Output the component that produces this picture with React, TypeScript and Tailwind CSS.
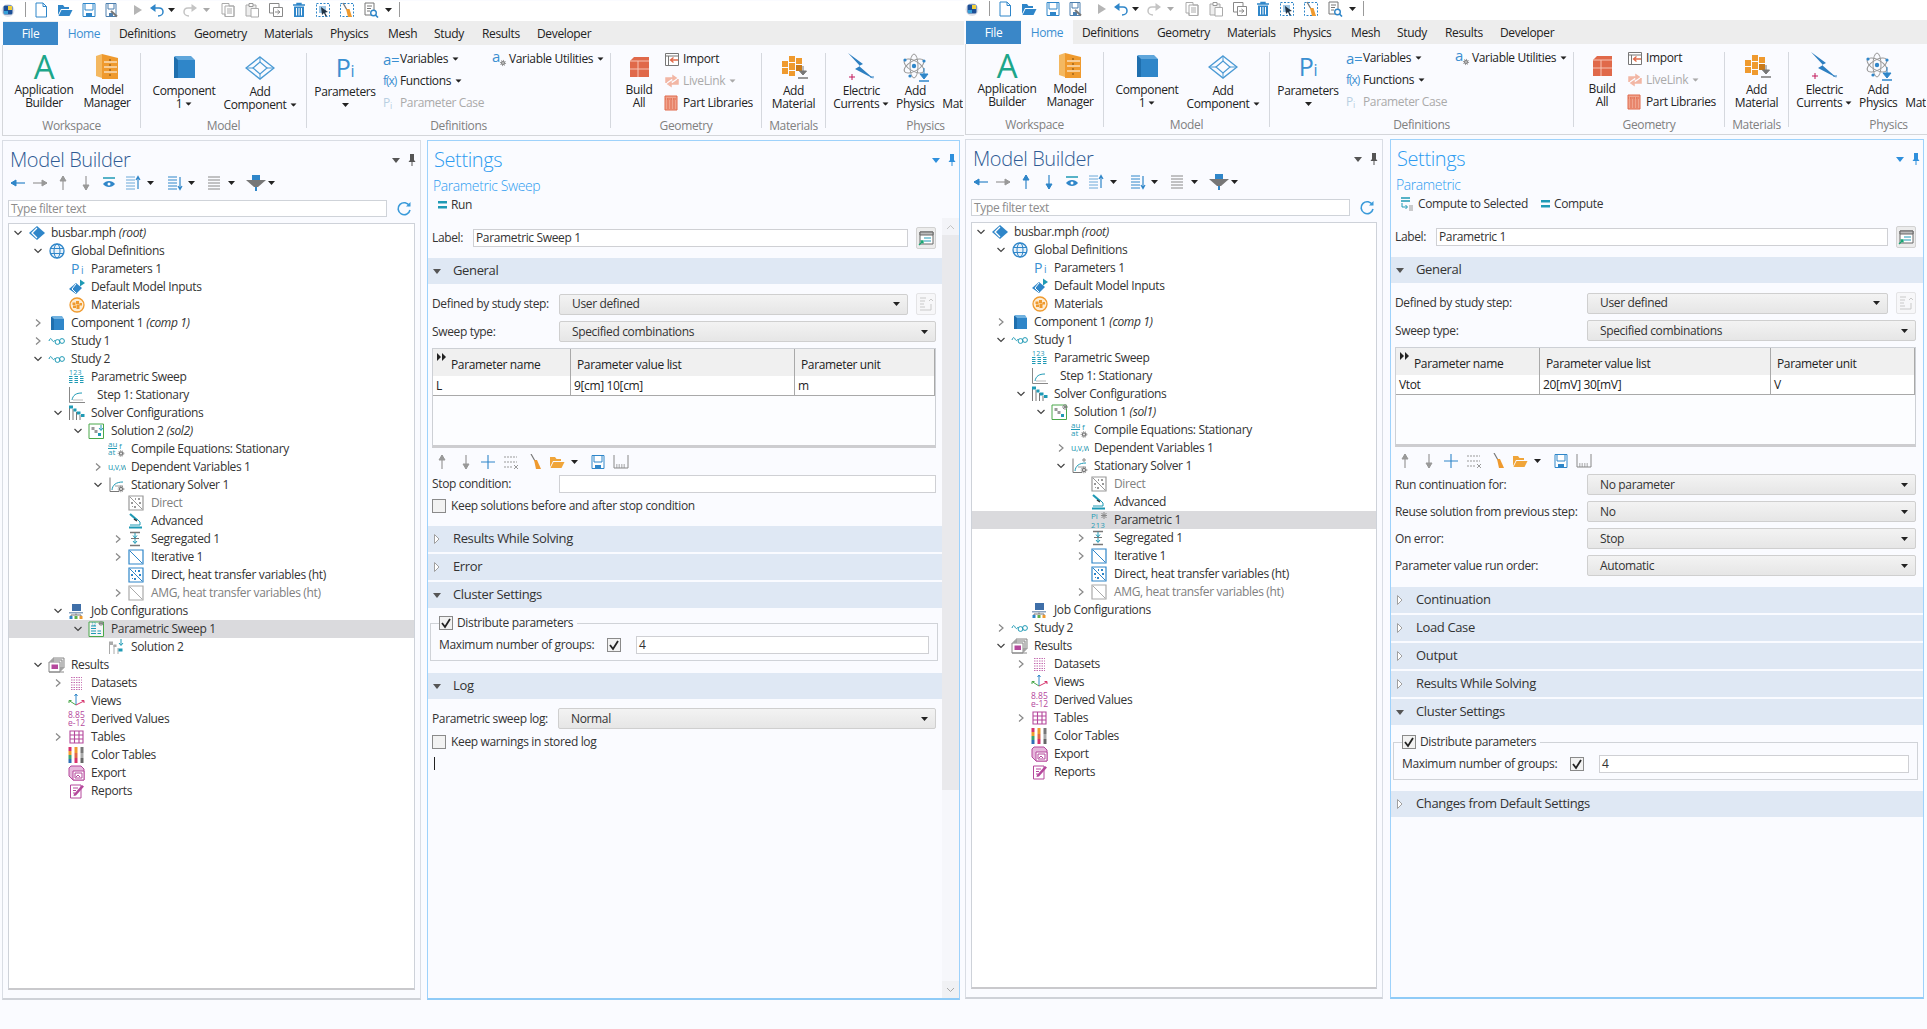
import type { ReactNode } from "react";

const B = "#2f86c9";
const T = "#1f9ab5";
const O = "#ef9a2e";
const M = "#b5489c";
const R = "#e0694a";

function S({ w = 16, h = 16, children, className = "" }: { w?: number; h?: number; children: ReactNode; className?: string }) {
	return (
		<svg width={w} height={h} viewBox={`0 0 ${w} ${h}`} fill="none" className={`shrink-0 ${className}`}>
			{children}
		</svg>
	);
}

function Tri({ className = "", color = "#222" }: { className?: string; color?: string }) {
	return (
		<S w={7} h={4} className={className}>
			<path d="M0 0H7L3.5 4Z" fill={color} />
		</S>
	);
}

function Gear({ x, y, r = 2.5 }: { x: number; y: number; r?: number }) {
	return (
		<g>
			<circle cx={x} cy={y} r={r + 0.6} fill="none" stroke="#777" strokeWidth="1" strokeDasharray="1 1" />
			<circle cx={x} cy={y} r={r} fill="#777" />
			<circle cx={x} cy={y} r={r / 2.5} fill="#fff" />
		</g>
	);
}

/* quick access icons */
const AppIcon = () => (
	<S>
		<circle cx="8" cy="8.5" r="6.5" fill="#dfe3ea" />
		<rect x="3.5" y="3.5" width="9" height="9" rx="1.5" fill="#1c4f96" />
		<path d="M8 4h4v4H8z" fill="#f1cf3b" />
		<path d="M4 9h4v3H4z" fill="#35a0d9" />
	</S>
);
const NewFile = () => (
	<S>
		<path d="M3 1H10L13.5 4.5V15H3Z" stroke={B} fill="#fff" />
		<path d="M10 1V4.5H13.5" stroke={B} />
	</S>
);
const OpenFolder = ({ c = B }: { c?: string }) => (
	<S>
		<path d="M1 3H6L7.5 5H12V7H4L1 13Z" fill={c} />
		<path d="M4.5 8H15.5L12.5 14H1.5Z" fill={c} />
	</S>
);
const Save = ({ c = B }: { c?: string }) => (
	<S>
		<path d="M2 1.5H14V14.5H2Z" stroke={c} fill="#fff" />
		<path d="M4 1.5H12V8H4Z" stroke={c} />
		<path d="M5 11H11V14.5H5Z" fill={c} />
	</S>
);
const SaveAs = () => (
	<S>
		<path d="M2 1.5H12V14.5H2Z" stroke="#4d7fae" fill="#fff" />
		<path d="M4 1.5H10V7H4Z" stroke="#4d7fae" />
		<path d="M5 11H9V14.5H5Z" fill="#4d7fae" />
		<path d="M7 9L13 14.5" stroke="#777" strokeWidth="2" />
	</S>
);
const Run = () => (
	<S>
		<path d="M4 3L12 8L4 13Z" fill="#b5b5b5" />
	</S>
);
const Undo = ({ c = B, flip = false }: { c?: string; flip?: boolean }) => (
	<S className={flip ? "-scale-x-100" : ""}>
		<path d="M3 6H10C13 6 14 8 14 10C14 12 12 14 9 14" stroke={c} strokeWidth="1.5" />
		<path d="M6.5 2V10L1 6Z" fill={c} />
	</S>
);
const CopyDoc = () => (
	<S>
		<path d="M2 1.5H9V4H14V14.5H5V12H2Z" stroke="#aaa" fill="#fff" />
		<path d="M5 4H14V14.5H5Z" stroke="#aaa" />
		<path d="M7 7H12M7 9H12M7 11H12" stroke="#aaa" />
	</S>
);
const Paste = () => (
	<S>
		<path d="M2 3H12V14H2Z" stroke="#aaa" fill="#eee" />
		<path d="M5 1.5H9V4.5H5Z" stroke="#999" fill="#fff" />
		<path d="M7 6.5H14.5V15H7Z" stroke="#aaa" fill="#fff" />
	</S>
);
const Duplicate = () => (
	<S>
		<path d="M1.5 1.5H11V11H1.5Z" stroke="#888" />
		<path d="M5.5 5.5H14.5V14.5H5.5Z" stroke="#888" fill="#fff" />
		<path d="M7 10H11M9.5 8L12 10L9.5 12" stroke="#888" />
	</S>
);
const Trash = () => (
	<S>
		<path d="M2 3H14M6 3V1.5H10V3" stroke={B} strokeWidth="1.4" />
		<path d="M3 4.5H13V15H3Z" fill={B} />
		<path d="M5.5 6V13.5M8 6V13.5M10.5 6V13.5" stroke="#fff" />
	</S>
);
const SelectBox = () => (
	<S>
		<path d="M1.5 1.5H14.5V14.5H1.5Z" stroke={B} strokeDasharray="2 1.5" />
		<path d="M4 4H11V11H4Z" fill="#9ec7e6" />
		<path d="M6 5L13 10L10 10.5L12 14L10.5 14.5L9 11L7 13Z" fill="#234" />
	</S>
);
const ClearBox = () => (
	<S>
		<path d="M1.5 1.5H14.5V14.5H1.5Z" stroke={B} strokeDasharray="2 1.5" />
		<path d="M4 1L8 8" stroke="#777" strokeWidth="1.3" />
		<path d="M7 7L10.5 7L13 15H9Z" fill={O} />
	</S>
);
const FindDoc = () => (
	<S>
		<path d="M2 1H11V13H2Z" stroke="#777" fill="#fff" />
		<path d="M4 4H9M4 6.5H8M4 9H7" stroke="#777" />
		<circle cx="10.5" cy="11" r="2.8" stroke={B} strokeWidth="1.4" fill="#fff" />
		<path d="M12.5 13L15 15.5" stroke={B} strokeWidth="1.6" />
	</S>
);
const VSep = () => <div className="w-px h-[15px] bg-[#9a9a9a]" />;

function QuickBar() {
	return (
		<div className="h-[20px] pb-[3px] bg-white flex items-center">
			<AppIcon />
			<div className="ml-[9px]"><VSep /></div>
			<div className="ml-[7px]"><NewFile /></div>
			<div className="ml-[8px]"><OpenFolder /></div>
			<div className="ml-[8px]"><Save /></div>
			<div className="ml-[7px]"><SaveAs /></div>
			<div className="ml-[10px]"><Run /></div>
			<div className="ml-[3px]"><Undo /></div>
			<Tri className="ml-[3px]" />
			<div className="ml-[7px]"><Undo c="#c4c4c4" flip /></div>
			<Tri className="ml-[5px]" color="#aaa" />
			<div className="ml-[10px]"><CopyDoc /></div>
			<div className="ml-[8px]"><Paste /></div>
			<div className="ml-[8px]"><Duplicate /></div>
			<div className="ml-[7px]"><Trash /></div>
			<div className="ml-[8px]"><SelectBox /></div>
			<div className="ml-[8px]"><ClearBox /></div>
			<div className="ml-[8px]"><FindDoc /></div>
			<Tri className="ml-[6px]" />
			<div className="ml-[7px]"><VSep /></div>
		</div>
	);
}

const tabs = [
	{ label: "Definitions", w: "w-[75px]" },
	{ label: "Geometry", w: "w-[70px]" },
	{ label: "Materials", w: "w-[66px]" },
	{ label: "Physics", w: "w-[58px]" },
	{ label: "Mesh", w: "w-[46px]" },
	{ label: "Study", w: "w-[48px]" },
	{ label: "Results", w: "w-[55px]" },
	{ label: "Developer", w: "w-[70px]" },
];

function TabStrip() {
	return (
		<div className="h-[24px] bg-[#ededed] flex items-end ml-px">
			<div className="w-[55px] h-[23px] bg-[#3a87c8] text-white flex items-center justify-center">File</div>
			<div className="w-[52px] h-[24px] pt-px bg-[#fafbff] text-[#3a8fd1] flex items-center justify-center">Home</div>
			<div className="w-[9px]" />
			{tabs.map((t) => (
				<div key={t.label} className={`${t.w} h-[24px] pt-px flex items-center`}>
					{t.label}
				</div>
			))}
		</div>
	);
}

/* ribbon icons */
const BigA = () => <span className="text-[33px] leading-[30px] text-[#1da68a]">A</span>;
const PiBig = () => (
	<span className="text-[#3a8fd1] leading-[30px] pt-[4px]">
		<span className="text-[25px]">P</span>
		<span className="text-[16px]">i</span>
	</span>
);
const Manager = () => (
	<S w={24} h={27}>
		<path d="M1 3L7 1V25L1 23Z" fill="#f4b860" />
		<path d="M7 1L23 5V26H7Z" fill={O} />
		<path d="M9 9H22M9 14H22M9 19H22" stroke="#fff" />
		<path d="M14 6.5h2v1h-2zM14 11.5h2v1h-2zM14 16.5h2v1h-2zM14 21.5h2v1h-2z" fill="#7a4a10" />
	</S>
);
const CubeBig = () => (
	<S w={24} h={24}>
		<path d="M2 2H6L9 6V23H2Z" fill="#1f6fae" />
		<path d="M2 1H19L23 5H6Z" fill="#5fa6db" />
		<path d="M6 5H23V23H6Z" fill={B} />
	</S>
);
const WireBig = () => (
	<S w={30} h={24}>
		<path d="M15 1L29 12L15 23L1 12Z" stroke="#4b9ad4" strokeWidth="1.4" />
		<path d="M8 12L15 6L22 12L15 18Z" stroke="#4b9ad4" strokeWidth="1.2" />
		<path d="M15 1V6M1 12H8M22 12H29M15 18V23" stroke="#4b9ad4" />
	</S>
);
const BuildIcon = () => (
	<S w={22} h={22}>
		<path d="M2 5L6 1H21V21H2Z" fill={R} />
		<path d="M2 5H21M10 5V21M2 13H21" stroke="#f7c4b4" />
	</S>
);
const MaterialIcon = () => (
	<S w={30} h={28}>
		<path d="M3 8h6v6H3zM10 3h6v6h-6zM17 5h6v6h-6zM3 15h6v6H3zM10 10h6v7h-6zM10 18h6v5h-6z" fill={O} />
		<path d="M17 12h6v6h-6z" fill="#c97a1a" />
		<path d="M24 13V21M20.5 18L24 22L27.5 18Z" stroke="#777" fill="#777" />
		<path d="M19 25H29" stroke="#777" strokeWidth="1.5" />
	</S>
);
const ElectricIcon = () => (
	<S w={30} h={30}>
		<path d="M2 1L17 12L13 14L28 27L9 17L14 14Z" fill="#2d7fc1" />
		<path d="M3 25H9M6 22V28" stroke="#c2185b" />
		<path d="M24 25H28" stroke="#2d7fc1" />
	</S>
);
const AtomIcon = () => (
	<S w={28} h={30}>
		<ellipse cx="13" cy="14" rx="11" ry="5" stroke="#999" transform="rotate(30 13 14)" />
		<ellipse cx="13" cy="14" rx="11" ry="5" stroke="#999" transform="rotate(-30 13 14)" />
		<ellipse cx="13" cy="14" rx="4" ry="12" stroke="#999" />
		<circle cx="13" cy="14" r="2.2" fill={B} />
		<circle cx="4" cy="8" r="1.6" fill={B} />
		<circle cx="23" cy="9" r="1.6" fill={B} />
		<circle cx="9" cy="24" r="1.6" fill={B} />
		<path d="M23 16V26M19 22L23 27L27 22Z" stroke={B} fill={B} />
		<path d="M18 29H28" stroke={B} strokeWidth="1.5" />
	</S>
);
const ImportIcon = () => (
	<S w={16} h={14}>
		<path d="M1.5 1.5H14.5V13.5H1.5Z" stroke="#777" fill="#fff" />
		<path d="M1.5 4H14.5M4.5 4V13.5" stroke="#777" />
		<path d="M14 8H7M9.5 5.5L6.5 8L9.5 10.5" stroke={R} strokeWidth="1.3" />
	</S>
);
const LiveLinkIcon = () => (
	<S w={16} h={14}>
		<path d="M2 9V4H9M9 2V6L12 4ZM14 5V10H7M7 8V12L4 10Z" stroke="#f2b6a4" strokeWidth="1.5" fill="#f2b6a4" />
	</S>
);
const PartLib = () => (
	<S w={14} h={16}>
		<path d="M1 1H13V15H1Z" fill="#f0a48e" stroke={R} />
		<path d="M4 3V14M7 3V14M10 3V14" stroke={R} />
		<path d="M1 4H13" stroke={R} strokeDasharray="1 1" />
	</S>
);

function Big({ w, top, icon, lines, drop }: { w: string; top: string; icon: ReactNode; lines: string[]; drop?: boolean }) {
	return (
		<div className={`${w} shrink-0 flex flex-col items-center leading-[13px]`}>
			<div className={`${top} flex items-center justify-center`}>{icon}</div>
			{lines.map((l, i) => (
				<div key={l} className="whitespace-nowrap flex items-center h-[13px]">
					{l}
					{drop && lines.length > 1 && i === lines.length - 1 && <Tri className="ml-[3px] scale-90" />}
				</div>
			))}
			{drop && lines.length === 1 && (
				<div className="h-[13px] flex items-center">
					<Tri />
				</div>
			)}
		</div>
	);
}

function Small({ icon, text, drop, off, w = "w-[17px]" }: { icon: ReactNode; text: string; drop?: boolean; off?: boolean; w?: string }) {
	return (
		<div className={`h-[22px] flex items-center whitespace-nowrap ${off ? "text-[#aaa]" : ""}`}>
			<div className={`${w} shrink-0 flex items-center`}>{icon}</div>
			{text}
			{drop && <Tri className="ml-[4px] scale-90" color={off ? "#aaa" : "#222"} />}
		</div>
	);
}

const Group = ({ w, label, labelClass = "", children }: { w: string; label: string; labelClass?: string; children: ReactNode }) => (
	<div className={`${w} shrink-0 flex flex-col overflow-hidden`}>
		<div className="h-[73px] pt-[5px] flex">{children}</div>
		<div className={`h-[16px] flex items-center justify-center text-[#808080] ${labelClass}`}>{label}</div>
	</div>
);
const Sep = () => <div className="w-px h-[75px] mt-[8px] bg-[#d5d8de] shrink-0" />;

function Ribbon() {
	return (
		<div className="h-[91px] bg-[#fafbff] border-b border-l border-[#d4d6da] flex">
			<Group w="w-[137px]" label="Workspace">
				<div className="w-[7px]" />
				<Big w="w-[68px]" top="h-[33px]" icon={<BigA />} lines={["Application", "Builder"]} />
				<Big w="w-[58px]" top="h-[33px]" icon={<Manager />} lines={["Model", "Manager"]} />
			</Group>
			<Sep />
			<Group w="w-[165px]" label="Model">
				<div className="w-px" />
				<Big w="w-[84px]" top="h-[34px]" icon={<CubeBig />} lines={["Component", "1"]} drop />
				<Big w="w-[68px]" top="h-[35px]" icon={<WireBig />} lines={["Add", "Component"]} drop />
			</Group>
			<Sep />
			<Group w="w-[303px]" label="Definitions">
				<div className="w-[6px]" />
				<Big w="w-[64px]" top="h-[35px]" icon={<PiBig />} lines={["Parameters"]} drop />
				<div className="w-[6px]" />
				<div className="w-[109px] -mt-[2px]">
					<Small icon={<span className="text-[#3a8fd1] text-[15px]">a=</span>} text="Variables" drop />
					<Small icon={<span className="text-[#3a8fd1] tracking-[-1px]">f(x)</span>} text="Functions" drop />
					<Small icon={<span className="text-[#b8cfe2]">P<sub className="text-[9px]">i</sub></span>} text="Parameter Case" off />
				</div>
				<div className="-mt-[2px]">
					<Small
						icon={
							<S w={16} h={16}>
								<text x="0" y="11" fontSize="15" fill="#3a8fd1">a</text>
								<Gear x={11} y={12} r={2} />
							</S>
						}
						text="Variable Utilities"
						drop
					/>
				</div>
			</Group>
			<Sep />
			<Group w="w-[150px]" label="Geometry">
				<div className="w-[4px]" />
				<Big w="w-[48px]" top="h-[33px]" icon={<BuildIcon />} lines={["Build", "All"]} />
				<div className="w-px" />
				<div className="-mt-[2px]">
					<Small w="w-[19px]" icon={<ImportIcon />} text="Import" />
					<Small w="w-[19px]" icon={<LiveLinkIcon />} text="LiveLink" drop off />
					<Small w="w-[19px]" icon={<PartLib />} text="Part Libraries" />
				</div>
			</Group>
			<Sep />
			<Group w="w-[63px]" label="Materials">
				<Big w="w-[63px]" top="h-[34px]" icon={<MaterialIcon />} lines={["Add", "Material"]} />
			</Group>
			<Sep />
			<Group w="w-[137px]" label="Physics" labelClass="pl-[62px]">
				<div className="w-[5px]" />
				<Big w="w-[62px]" top="h-[34px]" icon={<ElectricIcon />} lines={["Electric", "Currents"]} drop />
				<Big w="w-[46px]" top="h-[34px]" icon={<AtomIcon />} lines={["Add", "Physics"]} />
				<div className="pt-[47px] pl-[4px] leading-[13px]">Mat</div>
			</Group>
		</div>
	);
}

/* tree icons */
const RootIcon = () => (
	<S w={18}>
		<path d="M1 8L9 1L17 8L9 15Z" fill={B} />
		<path d="M9 3L4 8L9 13" stroke="#fff" strokeWidth="1.3" />
	</S>
);
const Globe = () => (
	<S w={18}>
		<circle cx="9" cy="8" r="7" stroke={B} strokeWidth="1.3" fill="#e6f1fa" />
		<ellipse cx="9" cy="8" rx="3" ry="7" stroke={B} />
		<path d="M2 5.5H16M2 10.5H16" stroke={B} />
	</S>
);
const PiSmall = () => (
	<span className="text-[#3a8fd1] text-[14px] leading-none ml-[3px]">
		P<span className="text-[10px] ml-[2px]">i</span>
	</span>
);
const InputsIcon = () => (
	<S w={18}>
		<path d="M1 10L8 4L14 9L8 15Z" fill={B} />
		<path d="M8 5L4 10L8 14" stroke="#fff" />
		<path d="M12 0.5L17 4L12 7.5Z" fill={T} />
	</S>
);
const MatIcon = () => (
	<S w={18}>
		<circle cx="9" cy="8" r="7" fill="#fdecd3" stroke={O} strokeWidth="1.3" />
		<path d="M4.5 5.5h3v2.5h-3zM8 4h3v3H8zM11.5 6h2.5v2.5h-2.5zM5 8.5h3V11H5zM8.5 7.5h3V12h-3z" fill={O} />
	</S>
);
const CubeSmall = () => (
	<S w={18}>
		<path d="M3 2H6L7 4V15H3Z" fill="#1f6fae" />
		<path d="M3 1H14L16 4H6Z" fill="#71b2e0" />
		<path d="M6 4H16V15H6Z" fill={B} />
	</S>
);
const StudyIcon = () => (
	<S w={18}>
		<path d="M1 8C2 5 3 5 4 7C5 9 6 9 7 7" stroke={T} />
		<circle cx="9.5" cy="9" r="2.4" stroke={T} />
		<circle cx="14" cy="8" r="2.4" stroke={T} />
	</S>
);
const SweepIcon = () => (
	<S w={18}>
		<text x="1" y="5.5" fontSize="7" fill={T} letterSpacing="0.3">123</text>
		<path d="M1 7.5H4.5M6.5 7.5H10M12 7.5H15.5M1 9.5H4.5M6.5 9.5H10M12 9.5H15.5M1 11.5H4.5M6.5 11.5H10M12 11.5H15.5M1 13.5H4.5M6.5 13.5H10M12 13.5H15.5" stroke={T} />
	</S>
);
const StepIcon = () => (
	<S w={18}>
		<path d="M1.5 0V15.5H17" stroke="#888" />
		<path d="M4 13C5 8 8 6 14 6" stroke={T} />
		<path d="M5 13H15" stroke="#bbb" />
	</S>
);
const SolverCfg = () => (
	<S w={18}>
		<path d="M1.5 1V15M5 4V15M8.5 7V15M12 10V15" stroke="#777" />
		<path d="M1 0.5h4v3H1zM5.5 3.5h3v3h-3zM9 6.5h3.5v3H9zM13 9h3.5v3H13z" fill={T} />
	</S>
);
const SolutionIcon = ({ spark = false }: { spark?: boolean }) => (
	<S w={18}>
		<path d="M1 1H15.5V15.5H1Z" stroke="#4aa84a" fill="#fff" />
		<path d="M3.5 4h3v3h-3zM6.5 7h3v3h-3z" fill="#999" />
		<path d="M10 10h3v3h-3z" fill={T} />
		{spark ? <path d="M14 0V6M11 3H17M12 1L16 5M16 1L12 5" stroke="#888" /> : <path d="M13 2V7M11 5L13 7.5L15 5" stroke={T} />}
	</S>
);
const CompileIcon = () => (
	<S w={18}>
		<text x="0" y="6" fontSize="8" fill={T} letterSpacing="0">au</text>
		<path d="M0 7.5H9" stroke={T} />
		<text x="0" y="14" fontSize="8" fill={T} letterSpacing="0">at</text>
		<text x="11" y="8" fontSize="8" fill={T}>f</text>
		<Gear x={13} y={12.5} r={2.2} />
	</S>
);
const DepVars = () => (
	<S w={18}>
		<text x="0" y="11" fontSize="8.5" fill={T} letterSpacing="-0.3">u,v,w</text>
	</S>
);
const StatSolver = ({ spark = false }: { spark?: boolean }) => (
	<S w={18}>
		<path d="M2 0.5V14.5H11" stroke="#777" />
		<path d="M4 13C4.5 8 8 5 15 5" stroke={T} />
		<path d="M7 9H15" stroke="#999" />
		<Gear x={13} y={12} r={2.2} />
		{spark && <path d="M13 0V4M11 2H15" stroke="#888" />}
	</S>
);
const Square = ({ c, dots }: { c: string; dots?: boolean }) => (
	<S w={18}>
		<path d="M1 1H15V15H1Z" stroke={c} strokeWidth="1.2" fill={dots ? "#fff" : "none"} />
		<path d="M2 2L14 14" stroke={c} />
		{dots && <path d="M3 7h2v2H3zM6 11h2v2H6zM10 3h2v2h-2zM11 7h2v2h-2zM4 11h1v1H4zM7 3h1v2H7z" fill={c} />}
	</S>
);
const Microscope = () => (
	<S w={18}>
		<path d="M2 1L9 7" stroke={T} strokeWidth="2.2" />
		<path d="M9 6L12 9V12H2" stroke={T} />
		<path d="M1 14.5H14" stroke={T} strokeWidth="2" />
		<path d="M6 6L9 8" stroke="#333" strokeWidth="1.5" />
	</S>
);
const SegIcon = () => (
	<S w={18}>
		<path d="M2 1.5H12M2 14.5H12" stroke="#777" strokeWidth="1.6" />
		<path d="M7 2V6M5 4.5L7 7L9 4.5M7 8V12M5 10L7 12.5L9 10" stroke={T} />
		<path d="M3 7.5H11" stroke="#777" />
	</S>
);
const JobIcon = () => (
	<S w={18}>
		<path d="M4 1H13V8H4Z" fill="#3f6fa8" />
		<path d="M1 9H15V10.5H1Z" fill="#8aa2bd" />
		<path d="M8 10.5V12M3 13V12H13V13" stroke="#777" />
		<path d="M1.5 13h3v3h-3z" fill={B} />
		<path d="M6.5 13h3v3h-3z" fill="#5fb04a" />
		<path d="M11.5 13h3v3h-3z" fill={O} />
	</S>
);
const SweepSel = () => (
	<S w={18}>
		<path d="M1 1H15.5V15.5H1Z" stroke="#4aa84a" fill="#f6f6f6" />
		<path d="M3 5H8M3 7.5H8M3 10H8M3 12.5H8M9.5 10H13M9.5 12.5H13" stroke={T} />
		<text x="3" y="4.5" fontSize="4.5" fill={T}>12</text>
		<path d="M13 0V5M10.5 2.5H15.5M11 1L15 4M15 1L11 4" stroke="#888" />
	</S>
);
const SolFlag = () => (
	<S w={18}>
		<path d="M1.5 15V3M6 15V6M10 15V9" stroke="#aaa" />
		<path d="M1 2.5h4V6H1zM5.5 5.5h3V8h-3z" fill="#aaa" />
		<path d="M10.5 9.5h4v3h-4z" fill={T} />
		<path d="M13 0V6M11 4L13 6.5L15 4" stroke={T} />
	</S>
);
const ResultsIcon = () => (
	<S w={18}>
		<path d="M5 1H16V11H5ZM3 3H14V13H3Z" stroke="#888" fill="#eee" />
		<path d="M1 5H12V15H1Z" stroke="#888" fill="#fff" />
		<path d="M3.5 7.5H10V12H3.5Z" fill={M} />
		<path d="M1 15H16" stroke="#888" />
	</S>
);
const DatasetsIcon = () => (
	<S w={18}>
		<path d="M3 2.5H14M3 5H14M3 7.5H14M3 10H14M3 12.5H14M3 14.5H14" stroke={M} strokeDasharray="1.5 1" opacity="0.8" />
	</S>
);
const ViewsIcon = () => (
	<S w={18}>
		<path d="M8 12V1M6.5 3L8 1L9.5 3" stroke={B} />
		<path d="M8 12L1 7.5M1 10V7.5L3.5 7.5" stroke="#4aa84a" />
		<path d="M8 12L16 8M13.5 7.5H16V10" stroke="#d6336c" />
	</S>
);
const DerivedIcon = () => (
	<S w={18}>
		<text x="0" y="7" fontSize="8.5" fill={M} letterSpacing="0">8.85</text>
		<text x="0" y="15" fontSize="8.5" fill={M} letterSpacing="0">e-12</text>
	</S>
);
const TablesIcon = () => (
	<S w={18}>
		<path d="M2 2H15V14H2ZM2 6H15M2 10H15M6.5 2V14M11 2V14" stroke={M} strokeWidth="1.1" />
	</S>
);
const ColorTablesIcon = () => (
	<S w={18}>
		<path d="M0.5 0h3v4h-3z" fill="#d6336c" />
		<path d="M0.5 4h3v4h-3z" fill={O} />
		<path d="M0.5 8h3v4h-3z" fill="#3ba272" />
		<path d="M0.5 12h3v4h-3z" fill="#2f6fb5" />
		<path d="M6.5 0h3v6h-3z" fill={O} />
		<path d="M6.5 6h3v5h-3z" fill={R} />
		<path d="M6.5 11h3v5h-3z" fill="#d6336c" />
		<path d="M12.5 0h3v6h-3z" fill="#777" />
		<path d="M12.5 6h3v5h-3z" fill="#aaa" />
		<path d="M12.5 11h3v5h-3z" fill="#666" />
	</S>
);
const ExportIcon = () => (
	<S w={18}>
		<path d="M1 3L3 1H13L16 4V15H5L1 11Z" fill="#e6b8dc" stroke={M} />
		<path d="M5 6H16V15H5Z" fill="#fff" stroke={M} />
		<path d="M7 8H14V13H7Z" stroke={M} />
		<path d="M8 12L10 10L12 12" stroke={M} />
	</S>
);
const ReportsIcon = () => (
	<S w={18}>
		<path d="M2.5 2H13V15H2.5Z" stroke={M} fill="#fff" />
		<path d="M5 5H10M5 7.5H8M5 10H7" stroke={M} />
		<path d="M6 11L14 2L16 3.5L8 12.5L5.5 13Z" fill={M} />
	</S>
);
const ParamIcon = () => (
	<S w={18}>
		<text x="0" y="7" fontSize="8" fill={T} letterSpacing="0">Pi</text>
		<path d="M13 0V7M10 3.5H16M10.5 1L15.5 6M15.5 1L10.5 6" stroke="#888" />
		<text x="0" y="15.5" fontSize="7.5" fill={T} letterSpacing="0.5">213</text>
	</S>
);

type NodeItem = {
	lvl: number;
	exp?: "o" | "c";
	icon: ReactNode;
	text: string;
	em?: string;
	grey?: boolean;
	sel?: boolean;
	wide?: boolean;
};

const globalDefs: NodeItem[] = [
	{ lvl: 0, exp: "o", icon: <RootIcon />, text: "busbar.mph", em: "(root)" },
	{ lvl: 1, exp: "o", icon: <Globe />, text: "Global Definitions" },
	{ lvl: 2, icon: <PiSmall />, text: "Parameters 1" },
	{ lvl: 2, icon: <InputsIcon />, text: "Default Model Inputs" },
	{ lvl: 2, icon: <MatIcon />, text: "Materials" },
	{ lvl: 1, exp: "c", icon: <CubeSmall />, text: "Component 1", em: "(comp 1)" },
];

const resultsKids: NodeItem[] = [
	{ lvl: 2, exp: "c", icon: <DatasetsIcon />, text: "Datasets" },
	{ lvl: 2, icon: <ViewsIcon />, text: "Views" },
	{ lvl: 2, icon: <DerivedIcon />, text: "Derived Values" },
	{ lvl: 2, exp: "c", icon: <TablesIcon />, text: "Tables" },
	{ lvl: 2, icon: <ColorTablesIcon />, text: "Color Tables" },
	{ lvl: 2, icon: <ExportIcon />, text: "Export" },
	{ lvl: 2, icon: <ReportsIcon />, text: "Reports" },
];

const leftTree: NodeItem[] = [
	...globalDefs,
	{ lvl: 1, exp: "c", icon: <StudyIcon />, text: "Study 1" },
	{ lvl: 1, exp: "o", icon: <StudyIcon />, text: "Study 2" },
	{ lvl: 2, icon: <SweepIcon />, text: "Parametric Sweep" },
	{ lvl: 2, icon: <StepIcon />, text: "Step 1: Stationary", wide: true },
	{ lvl: 2, exp: "o", icon: <SolverCfg />, text: "Solver Configurations" },
	{ lvl: 3, exp: "o", icon: <SolutionIcon />, text: "Solution 2", em: "(sol2)" },
	{ lvl: 4, icon: <CompileIcon />, text: "Compile Equations: Stationary" },
	{ lvl: 4, exp: "c", icon: <DepVars />, text: "Dependent Variables 1" },
	{ lvl: 4, exp: "o", icon: <StatSolver />, text: "Stationary Solver 1" },
	{ lvl: 5, icon: <Square c="#999" dots />, text: "Direct", grey: true },
	{ lvl: 5, icon: <Microscope />, text: "Advanced" },
	{ lvl: 5, exp: "c", icon: <SegIcon />, text: "Segregated 1" },
	{ lvl: 5, exp: "c", icon: <Square c={B} />, text: "Iterative 1" },
	{ lvl: 5, icon: <Square c={B} dots />, text: "Direct, heat transfer variables (ht)" },
	{ lvl: 5, exp: "c", icon: <Square c="#aaa" />, text: "AMG, heat transfer variables (ht)", grey: true },
	{ lvl: 2, exp: "o", icon: <JobIcon />, text: "Job Configurations" },
	{ lvl: 3, exp: "o", icon: <SweepSel />, text: "Parametric Sweep 1", sel: true },
	{ lvl: 4, icon: <SolFlag />, text: "Solution 2" },
	{ lvl: 1, exp: "o", icon: <ResultsIcon />, text: "Results" },
	...resultsKids,
];

const rightTree: NodeItem[] = [
	...globalDefs,
	{ lvl: 1, exp: "o", icon: <StudyIcon />, text: "Study 1" },
	{ lvl: 2, icon: <SweepIcon />, text: "Parametric Sweep" },
	{ lvl: 2, icon: <StepIcon />, text: "Step 1: Stationary", wide: true },
	{ lvl: 2, exp: "o", icon: <SolverCfg />, text: "Solver Configurations" },
	{ lvl: 3, exp: "o", icon: <SolutionIcon spark />, text: "Solution 1", em: "(sol1)" },
	{ lvl: 4, icon: <CompileIcon />, text: "Compile Equations: Stationary" },
	{ lvl: 4, exp: "c", icon: <DepVars />, text: "Dependent Variables 1" },
	{ lvl: 4, exp: "o", icon: <StatSolver spark />, text: "Stationary Solver 1" },
	{ lvl: 5, icon: <Square c="#999" dots />, text: "Direct", grey: true },
	{ lvl: 5, icon: <Microscope />, text: "Advanced" },
	{ lvl: 5, icon: <ParamIcon />, text: "Parametric 1", sel: true },
	{ lvl: 5, exp: "c", icon: <SegIcon />, text: "Segregated 1" },
	{ lvl: 5, exp: "c", icon: <Square c={B} />, text: "Iterative 1" },
	{ lvl: 5, icon: <Square c={B} dots />, text: "Direct, heat transfer variables (ht)" },
	{ lvl: 5, exp: "c", icon: <Square c="#aaa" />, text: "AMG, heat transfer variables (ht)", grey: true },
	{ lvl: 2, icon: <JobIcon />, text: "Job Configurations" },
	{ lvl: 1, exp: "c", icon: <StudyIcon />, text: "Study 2" },
	{ lvl: 1, exp: "o", icon: <ResultsIcon />, text: "Results" },
	...resultsKids,
];

const indent = ["pl-px", "pl-[21px]", "pl-[41px]", "pl-[61px]", "pl-[81px]", "pl-[101px]"];

function Chevron({ open }: { open: boolean }) {
	return (
		<S w={16} h={12}>
			{open ? <path d="M4.5 4L8 7.5L11.5 4" stroke="#444" strokeWidth="1.2" /> : <path d="M6 2.5L10 6L6 9.5" stroke="#888" strokeWidth="1.2" />}
		</S>
	);
}

function TreeRow({ node }: { node: NodeItem }) {
	return (
		<div className={`h-[18px] flex items-center whitespace-nowrap ${indent[node.lvl]} ${node.sel ? "bg-[#dadadd]" : ""} ${node.grey ? "text-[#808080]" : "text-[#333]"}`}>
			<div className="w-[16px] shrink-0">{node.exp && <Chevron open={node.exp === "o"} />}</div>
			<div className="w-[18px] ml-[2px] shrink-0 flex items-center">{node.icon}</div>
			<span className={node.wide ? "ml-[11px]" : "ml-[5px]"}>
				{node.text}
				{node.em && <em className="ml-[3px]">{node.em}</em>}
			</span>
		</div>
	);
}

function Arrow({ rot, c }: { rot: string; c: string }) {
	return (
		<S className={rot}>
			<path d="M1 8H15" stroke={c} strokeWidth="1.2" />
			<path d="M1 8L6 5V11Z" fill={c} stroke={c} />
		</S>
	);
}

function PanelCaret({ c }: { c: string }) {
	return (
		<div className="flex items-center gap-[8px]">
			<S w={8} h={5}>
				<path d="M0 0H8L4 5Z" fill={c} />
			</S>
			<S w={8} h={12}>
				<path d="M2 0H6V6L7.5 8H0.5L2 6Z M3.5 8H4.5V12H3.5Z" fill={c} />
			</S>
		</div>
	);
}

function ModelBuilder({ tree, w, gap, upColor }: { tree: NodeItem[]; w: string; gap: string; upColor: string }) {
	return (
		<div className={`${w} ${gap} shrink-0 border border-[#d9dde4] border-b-2 border-b-[#cfd2d8] bg-[#fafbff] flex flex-col text-[#333]`}>
			<div className="h-[26px] mt-[6px] mb-px flex items-center justify-between pl-[7px] pr-[4px]">
				<span className="text-[20px] font-light text-[#2f5b94] tracking-[-0.4px]">Model Builder</span>
				<PanelCaret c="#555" />
			</div>
			<div className="h-[18px] flex items-center">
				<div className="ml-[7px]"><Arrow rot="" c={B} /></div>
				<div className="ml-[6px]"><Arrow rot="rotate-180" c="#999" /></div>
				<div className="ml-[7px]"><Arrow rot="rotate-90" c={upColor} /></div>
				<div className="ml-[7px]"><Arrow rot="-rotate-90" c={upColor} /></div>
				<div className="ml-[7px]">
					<S>
						<path d="M2 3H14" stroke={T} strokeWidth="1.5" />
						<path d="M2 9C5 5 11 5 14 9C11 13 5 13 2 9Z" fill={B} />
						<circle cx="8" cy="9" r="1.5" fill="#fff" />
					</S>
				</div>
				<div className="ml-[8px]">
					<S>
						<path d="M1 2H10M1 5H10M1 8H10M1 11H10M1 14H10" stroke="#6aa8d8" />
						<path d="M13 14V2M11 5L13 1.5L15 5" stroke={B} strokeWidth="1.2" />
					</S>
				</div>
				<Tri className="ml-[6px]" />
				<div className="ml-[13px]">
					<S>
						<path d="M1 2H10M1 5H10M1 8H10M1 11H10M1 14H10" stroke={B} />
						<path d="M13 2V14M11 11L13 14.5L15 11" stroke={B} strokeWidth="1.2" />
					</S>
				</div>
				<Tri className="ml-[5px]" />
				<div className="ml-[11px]">
					<S>
						<path d="M2 2H14M2 5H14M2 8H14M2 11H14M2 14H14" stroke="#888" />
					</S>
				</div>
				<Tri className="ml-[6px]" />
				<div className="ml-[11px]">
					<S w={20}>
						<path d="M6 0H14V5H6Z" fill={B} />
						<path d="M0 5H20L12 12H8Z" fill="#777" />
						<path d="M9 12H11V16H9Z" fill={B} />
					</S>
				</div>
				<Tri className="ml-[2px]" />
			</div>
			<div className="mt-[8px] flex items-center h-[17px] pl-[5px]">
				<div className="w-[379px] h-[17px] bg-white border border-[#cfd3d9] flex items-center pl-[2px] text-[#8c8c8c] shrink-0">Type filter text</div>
				<S w={16} className="ml-[9px]">
					<path d="M13.5 5A6 6 0 1 0 14 9" stroke="#3a9ad9" strokeWidth="1.6" />
					<path d="M10 5.5H14.5V1Z" fill="#3a9ad9" />
				</S>
			</div>
			<div className="mt-[6px] ml-[5px] mr-[5px] flex-1 mb-[8px] bg-white border border-[#ced2d9] border-b-2 border-b-[#c9c9cc] overflow-hidden">
				{tree.map((n) => (
					<TreeRow key={n.text + n.lvl + (n.em ?? "")} node={n} />
				))}
			</div>
		</div>
	);
}

/* settings */
function SectionHead({ title, open }: { title: string; open?: boolean }) {
	return (
		<div className="h-[26px] bg-[#dfe8f4] flex items-center pl-[4px] mb-[2px] text-[13px] text-[#333]">
			<div className="w-[10px] flex justify-center">
				{open ? (
					<S w={8} h={5}>
						<path d="M0 0H8L4 5Z" fill="#555" />
					</S>
				) : (
					<S w={6} h={10}>
						<path d="M0.5 0.5L5 5L0.5 9.5Z" fill="#fff" stroke="#a0a0a0" />
					</S>
				)}
			</div>
			<span className="ml-[11px]">{title}</span>
		</div>
	);
}

function Select({ value, className = "" }: { value: string; className?: string }) {
	return (
		<div className={`h-[21px] flex-1 min-w-0 bg-linear-to-b from-[#f3f3f3] to-[#e6e6e6] border border-[#cfcfcf] rounded-[2px] flex items-center justify-between pl-[12px] pr-[7px] text-[#333] ${className}`}>
			{value}
			<S w={7} h={4}>
				<path d="M0 0H7L3.5 4Z" fill="#222" />
			</S>
		</div>
	);
}

function DocButton({ off }: { off?: boolean }) {
	return (
		<div className={`w-[20px] h-[22px] shrink-0 ml-[8px] border rounded-[2px] flex items-center justify-center ${off ? "border-[#e4e4e6] bg-[#f7f7f9]" : "border-[#d2d2d2] bg-[#ececec]"}`}>
			{off ? (
				<S w={14} h={14}>
					<path d="M1 1H7M1 4H6M1 7H5M1 10H6M1 13H12V7M10 4L12 2L14 4" stroke="#c9c9c9" />
				</S>
			) : (
				<S w={16} h={16}>
					<path d="M2 2H15V14H2Z" stroke="#666" fill="#fff" />
					<path d="M2 2H15V5H2Z" fill="#bbb" stroke="#666" />
					<path d="M6 8H13M6 11H13" stroke={T} />
					<path d="M1 15L5 11M2.5 11H5V13.5" stroke="#17a673" strokeWidth="1.3" />
				</S>
			)}
		</div>
	);
}

const Row = ({ label, labelW, children, className = "" }: { label: string; labelW: string; children: ReactNode; className?: string }) => (
	<div className={`flex items-center text-[#333] ${className}`}>
		<div className={`${labelW} shrink-0 whitespace-nowrap leading-[16px]`}>{label}</div>
		{children}
	</div>
);

function Check({ on, className = "" }: { on?: boolean; className?: string }) {
	return (
		<div className={`w-[14px] h-[14px] shrink-0 border border-[#8a8a8a] bg-[#f2f2f2] flex items-center justify-center ${className}`}>
			{on && (
				<S w={12} h={12}>
					<path d="M2 6L5 10L10 2" stroke="#222" strokeWidth="1.8" />
				</S>
			)}
		</div>
	);
}

function ParamTable({ name, values, unit, cols }: { name: string; values: string; unit: string; cols: string }) {
	return (
		<div className="mt-[6px] h-[100px] border border-[#cdd0d5] border-b-[3px] border-b-[#cdcdd0] bg-[#fcfdff]">
			<div className={`grid ${cols} border-b border-[#a9a9a9] border-r`}>
				<div className="h-[27px] bg-[#f0f0f0] border-r border-[#a9a9a9] flex pl-[4px]">
					<S w={14} h={8} className="mt-[4px]">
						<path d="M0 0L4 4L0 8ZM5 0L9 4L5 8Z" fill="#222" />
					</S>
					<span className="self-center pt-[5px]">Parameter name</span>
				</div>
				<div className="h-[27px] bg-[#f0f0f0] border-r border-[#a9a9a9] flex items-center pl-[6px] pt-[5px]">Parameter value list</div>
				<div className="h-[27px] bg-[#f0f0f0] flex items-center pl-[6px] pt-[5px]">Parameter unit</div>
				<div className="h-[19px] bg-white border-r border-[#a9a9a9] flex items-center pl-[3px]">{name}</div>
				<div className="h-[19px] bg-white border-r border-[#a9a9a9] flex items-center pl-[3px]">{values}</div>
				<div className="h-[19px] bg-white flex items-center pl-[3px]">{unit}</div>
			</div>
		</div>
	);
}

function TableTools() {
	return (
		<div className="h-[18px] mt-[5px] flex items-center">
			<div className="ml-[2px]"><Arrow rot="rotate-90" c="#999" /></div>
			<div className="ml-[8px]"><Arrow rot="-rotate-90" c="#999" /></div>
			<div className="ml-[6px]">
				<S>
					<path d="M8 1V15M1 8H15" stroke={B} strokeWidth="1.1" />
				</S>
			</div>
			<div className="ml-[7px]">
				<S>
					<path d="M1 3H14M1 8H14M1 13H9" stroke="#999" strokeDasharray="2 1" />
					<path d="M11 11L15 15M15 11L11 15" stroke="#999" />
				</S>
			</div>
			<div className="ml-[8px]">
				<S>
					<path d="M4 0L8 7" stroke="#777" strokeWidth="1.2" />
					<path d="M7 6L10 6L14 15H9Z" fill={O} />
				</S>
			</div>
			<div className="ml-[6px]"><OpenFolder c="#f0a53a" /></div>
			<Tri className="ml-[6px]" />
			<div className="ml-[12px]"><Save c={B} /></div>
			<div className="ml-[7px]">
				<S>
					<path d="M1 1V14H15V1" stroke="#888" />
					<path d="M3 11H13M3 13H13" stroke="#888" strokeDasharray="1.5 1" />
				</S>
			</div>
		</div>
	);
}

function ClusterBody({ labelGap }: { labelGap: string }) {
	return (
		<fieldset className="mt-[8px] -mx-[2px] border border-[#d0d3d8] pl-[8px] pr-[8px] pb-[6px] min-w-0">
			<legend className="flex items-center ml-[0px] pr-[4px] h-[14px] text-[#333]">
				<Check on />
				<span className="ml-[4px]">Distribute parameters</span>
			</legend>
			<div className="mt-[6px] flex items-center text-[#333]">
				<span className={`${labelGap} shrink-0 whitespace-nowrap`}>Maximum number of groups:</span>
				<Check on />
				<div className="ml-[15px] flex-1 h-[18px] bg-white border border-[#cfd0d4] flex items-center pl-[2px]">4</div>
			</div>
		</fieldset>
	);
}

function SettingsHeader({ sub, actions }: { sub: string; actions: ReactNode }) {
	return (
		<div className="h-[77px]">
			<div className="h-[26px] mt-[6px] flex items-center justify-between pl-[6px] pr-[3px]">
				<span className="text-[20px] font-light text-[#2e9bf0] tracking-[-0.4px]">Settings</span>
				<PanelCaret c="#2e8fdc" />
			</div>
			<div className="h-[20px] mt-[2px] flex items-center pl-[5px] text-[14px] font-light text-[#2e9bf0] tracking-[-0.4px]">{sub}</div>
			<div className="h-[18px] mt-px flex items-center text-[#333]">{actions}</div>
		</div>
	);
}

const EqIcon = () => (
	<S w={10} h={8}>
		<path d="M0 0H9V2.5H0ZM0 5H9V7.5H0Z" fill={T} />
	</S>
);

function LeftSettings() {
	return (
		<div className="w-[533px] shrink-0 border border-[#9ed2fb] border-b-2 border-b-[#8fcbf7] bg-[#fafbff] flex flex-col">
			<SettingsHeader
				sub="Parametric Sweep"
				actions={
					<>
						<div className="ml-[10px]"><EqIcon /></div>
						<span className="ml-[3px]">Run</span>
					</>
				}
			/>
			<div className="flex-1 flex min-h-0">
				<div className="flex-1 min-w-0">
					<div className="px-[4px] pr-[6px] pt-[9px] pb-[9px]">
						<Row label="Label:" labelW="w-[41px]">
							<div className="flex-1 h-[18px] bg-white border border-[#cfd0d4] flex items-center pl-[2px] text-[#333]">Parametric Sweep 1</div>
							<DocButton />
						</Row>
					</div>
					<SectionHead title="General" open />
					<div className="px-[4px] pr-[6px] pt-[7px] pb-[11px]">
						<Row label="Defined by study step:" labelW="w-[127px]">
							<Select value="User defined" />
							<DocButton off />
						</Row>
						<Row label="Sweep type:" labelW="w-[127px]" className="mt-[6px]">
							<Select value="Specified combinations" />
						</Row>
						<ParamTable name="L" values="9[cm] 10[cm]" unit="m" cols="grid-cols-[138px_224px_1fr]" />
						<TableTools />
						<Row label="Stop condition:" labelW="w-[127px]" className="mt-[4px]">
							<div className="flex-1 h-[18px] bg-white border border-[#cfd0d4]" />
						</Row>
						<div className="mt-[4px] flex items-center text-[#333]">
							<Check />
							<span className="ml-[5px]">Keep solutions before and after stop condition</span>
						</div>
					</div>
					<SectionHead title="Results While Solving" />
					<SectionHead title="Error" />
					<SectionHead title="Cluster Settings" open />
					<div className="px-[4px] pr-[6px] pb-[12px]">
						<ClusterBody labelGap="w-[168px]" />
					</div>
					<SectionHead title="Log" open />
					<div className="px-[4px] pr-[6px] pt-[7px]">
						<Row label="Parametric sweep log:" labelW="w-[126px]">
							<Select value="Normal" />
						</Row>
						<div className="mt-[4px] flex items-center text-[#333]">
							<Check />
							<span className="ml-[5px]">Keep warnings in stored log</span>
						</div>
						<div className="mt-[6px] ml-[2px] w-px h-[13px] bg-[#222]" />
					</div>
				</div>
				<div className="w-[17px] shrink-0 flex flex-col">
					<div className="h-[17px] bg-[#f3f4f8] flex items-center justify-center">
						<S w={9} h={6}>
							<path d="M1 5L4.5 1.5L8 5" stroke="#c4c4c4" />
						</S>
					</div>
					<div className="h-[555px] bg-[#e9e9ec]" />
					<div className="flex-1 bg-[#f6f7fb]" />
					<div className="h-[17px] bg-[#f0f1f4] flex items-center justify-center">
						<S w={9} h={6}>
							<path d="M1 1L4.5 4.5L8 1" stroke="#a8a8a8" />
						</S>
					</div>
				</div>
			</div>
		</div>
	);
}

function RightSettings() {
	return (
		<div className="w-[534px] shrink-0 border border-[#9ed2fb] border-b-2 border-b-[#8fcbf7] bg-[#fafbff] flex flex-col">
			<SettingsHeader
				sub="Parametric"
				actions={
					<>
						<div className="ml-[9px]">
							<S w={13} h={15}>
								<path d="M1 1H10M1 4H10" stroke={T} strokeWidth="1.6" />
								<path d="M2 6V10H7M5.5 8L7.5 10L5.5 12" stroke={T} />
								<path d="M9 9H13M9 11H13M9 13H13" stroke="#999" />
							</S>
						</div>
						<span className="ml-[5px] w-[120px]">Compute to Selected</span>
						<div className="ml-[3px]"><EqIcon /></div>
						<span className="ml-[3px]">Compute</span>
					</>
				}
			/>
			<div className="px-[4px] pr-[7px] pt-[9px] pb-[9px]">
				<Row label="Label:" labelW="w-[41px]">
					<div className="flex-1 h-[18px] bg-white border border-[#cfd0d4] flex items-center pl-[2px] text-[#333]">Parametric 1</div>
					<DocButton />
				</Row>
			</div>
			<SectionHead title="General" open />
			<div className="px-[4px] pr-[7px] pt-[7px] pb-[11px]">
				<Row label="Defined by study step:" labelW="w-[192px]">
					<Select value="User defined" />
					<DocButton off />
				</Row>
				<Row label="Sweep type:" labelW="w-[192px]" className="mt-[6px]">
					<Select value="Specified combinations" />
				</Row>
				<ParamTable name="Vtot" values="20[mV] 30[mV]" unit="V" cols="grid-cols-[144px_231px_1fr]" />
				<TableTools />
				<Row label="Run continuation for:" labelW="w-[192px]" className="mt-[4px]">
					<Select value="No parameter" />
				</Row>
				<Row label="Reuse solution from previous step:" labelW="w-[192px]" className="mt-[6px]">
					<Select value="No" />
				</Row>
				<Row label="On error:" labelW="w-[192px]" className="mt-[6px]">
					<Select value="Stop" />
				</Row>
				<Row label="Parameter value run order:" labelW="w-[192px]" className="mt-[6px]">
					<Select value="Automatic" />
				</Row>
			</div>
			<SectionHead title="Continuation" />
			<SectionHead title="Load Case" />
			<SectionHead title="Output" />
			<SectionHead title="Results While Solving" />
			<SectionHead title="Cluster Settings" open />
			<div className="px-[4px] pr-[7px] pb-[11px]">
				<ClusterBody labelGap="w-[168px]" />
			</div>
			<SectionHead title="Changes from Default Settings" />
		</div>
	);
}

function ComsolWindow({ left }: { left: boolean }) {
	return (
		<div className={left ? "w-[964px] shrink-0 pt-px overflow-hidden" : "w-[963px] shrink-0 overflow-hidden"}>
			<QuickBar />
			<div className={left ? "ml-[2px]" : "ml-px"}>
				<TabStrip />
				<Ribbon />
			</div>
			<div className={`mt-[4px] h-[860px] flex ${left ? "ml-[2px]" : "ml-px"}`}>
				<ModelBuilder tree={left ? leftTree : rightTree} w={left ? "w-[419px]" : "w-[418px]"} gap={left ? "mr-[6px]" : "mr-[7px]"} upColor={left ? "#999" : B} />
				{left ? <LeftSettings /> : <RightSettings />}
			</div>
		</div>
	);
}

export default function App() {
	return (
		<div className="w-[1927px] h-[1029px] overflow-hidden bg-[#fafbff] flex font-['Open_Sans',sans-serif] text-[12px] tracking-[-0.35px] text-[#222]">
			<ComsolWindow left />
			<ComsolWindow left={false} />
		</div>
	);
}
